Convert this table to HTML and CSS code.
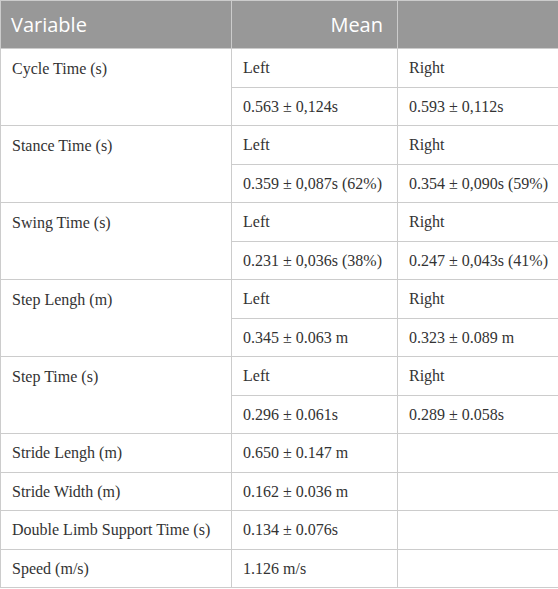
FILE: index.html
```html
<!DOCTYPE html>
<html>
<head>
<meta charset="utf-8">
<link rel="stylesheet" href="styles.css">
</head>
<body>
<table class="data">
  <colgroup>
    <col class="c1"><col class="c2"><col class="c3">
  </colgroup>
  <thead>
    <tr class="head">
      <th class="h-var">Variable</th>
      <th class="h-mean">Mean</th>
      <th></th>
    </tr>
  </thead>
  <tbody>
    <tr><td rowspan="2" class="grp">Cycle Time (s)</td><td>Left</td><td>Right</td></tr>
    <tr><td>0.563 ± 0,124s</td><td>0.593 ± 0,112s</td></tr>
    <tr><td rowspan="2" class="grp">Stance Time (s)</td><td>Left</td><td>Right</td></tr>
    <tr><td>0.359 ± 0,087s (62%)</td><td>0.354 ± 0,090s (59%)</td></tr>
    <tr><td rowspan="2" class="grp">Swing Time (s)</td><td>Left</td><td>Right</td></tr>
    <tr><td>0.231 ± 0,036s (38%)</td><td>0.247 ± 0,043s (41%)</td></tr>
    <tr><td rowspan="2" class="grp">Step Lengh (m)</td><td>Left</td><td>Right</td></tr>
    <tr><td>0.345 ± 0.063 m</td><td>0.323 ± 0.089 m</td></tr>
    <tr><td rowspan="2" class="grp">Step Time (s)</td><td>Left</td><td>Right</td></tr>
    <tr><td>0.296 ± 0.061s</td><td>0.289 ± 0.058s</td></tr>
    <tr><td>Stride Lengh (m)</td><td>0.650 ± 0.147 m</td><td></td></tr>
    <tr><td>Stride Width (m)</td><td>0.162 ± 0.036 m</td><td></td></tr>
    <tr><td>Double Limb Support Time (s)</td><td>0.134 ± 0.076s</td><td></td></tr>
    <tr><td>Speed (m/s)</td><td>1.126 m/s</td><td></td></tr>
  </tbody>
</table>
</body>
</html>
```
FILE: styles.css
```css
html, body {
  margin: 0;
  padding: 0;
  background: #ffffff;
}

.data {
  width: 558px;
  border-collapse: collapse;
  table-layout: fixed;
  font-family: "Liberation Serif", "Times New Roman", serif;
  font-size: 16px;
  color: #333333;
}

.c1 { width: 231px; }
.c2 { width: 166px; }
.c3 { width: 161px; }

.data th,
.data td {
  border: 1.5px solid #cccccc;
  padding: 1px 11px 0;
  text-align: left;
  vertical-align: middle;
  height: 36.5px;
  line-height: 20px;
  white-space: nowrap;
}

.data .head th {
  background: #989898;
  color: #ffffff;
  font-family: "Open Sans", "Noto Sans", sans-serif;
  font-weight: 400;
  font-size: 20px;
  height: 47px;
  padding: 0 10px;
}

.data .head .h-mean {
  text-align: right;
  padding-right: 14px;
}

.data td.grp {
  vertical-align: top;
  padding-top: 10px;
  height: auto;
}
```
